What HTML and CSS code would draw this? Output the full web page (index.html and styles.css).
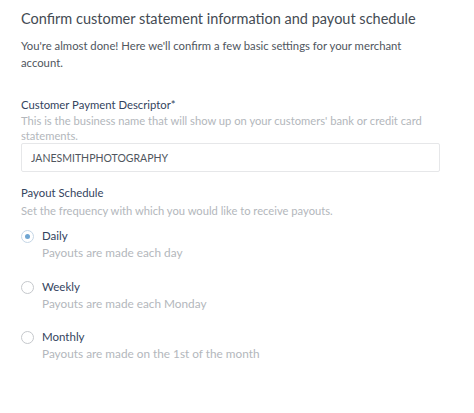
FILE: index.html
```html
<!DOCTYPE html>
<html lang="en">
<head>
    <meta charset="UTF-8">
    <meta name="viewport" content="width=device-width, initial-scale=1.0">
    <title>Payout Schedule</title>
    <link rel="stylesheet" href="styles.css">
</head>
<body>

<div class="step-container">
    <h1>Confirm customer statement information and payout schedule</h1>
    <p class="intro">You're almost done! Here we'll confirm a few basic settings for your merchant account.</p>

    <div class="field">
        <label for="descriptor">Customer Payment Descriptor*</label>
        <p class="help">This is the business name that will show up on your customers' bank or credit card statements.</p>
        <input type="text" id="descriptor" value="JANESMITHPHOTOGRAPHY">
    </div>

    <div class="field">
        <div class="field-title">Payout Schedule</div>
        <p class="help">Set the frequency with which you would like to receive payouts.</p>

        <div class="radio-list">
            <label class="radio-option">
                <span class="radio checked"></span>
                <span class="radio-text">
                    <span class="radio-label">Daily</span>
                    <span class="radio-desc">Payouts are made each day</span>
                </span>
            </label>
            <label class="radio-option">
                <span class="radio"></span>
                <span class="radio-text">
                    <span class="radio-label">Weekly</span>
                    <span class="radio-desc">Payouts are made each Monday</span>
                </span>
            </label>
            <label class="radio-option">
                <span class="radio"></span>
                <span class="radio-text">
                    <span class="radio-label">Monthly</span>
                    <span class="radio-desc">Payouts are made on the 1st of the month</span>
                </span>
            </label>
        </div>
    </div>
</div>

</body>
</html>
```

FILE: styles.css
```css
body {
    font-family: Lato, "Noto Sans", sans-serif;
    background-color: #fff;
    margin: 0;
    padding: 0;
}

.step-container {
    padding: 9px 34px 0 21px;
}

h1 {
    font-size: 14.5px;
    font-weight: normal;
    color: #444b53;
    margin: 0;
    line-height: 20px;
    white-space: nowrap;
}

.intro {
    font-size: 11.3px;
    color: #4f565e;
    line-height: 17px;
    margin: 8px 0 0 0;
}

.field {
    margin-top: 26px;
}

.field + .field {
    margin-top: 13px;
}

label, .field-title {
    display: block;
    font-size: 11.3px;
    color: #34445e;
    line-height: 16px;
}

.help {
    font-size: 11.2px;
    color: #b3b7bc;
    line-height: 15px;
    margin: 0;
}

.field-title + .help {
    margin-top: 2px;
}

input {
    display: block;
    box-sizing: border-box;
    width: 100%;
    height: 29px;
    margin-top: 0;
    padding: 0 9px;
    border: 1px solid #e6e7e9;
    border-radius: 2px;
    font-family: inherit;
    font-size: 10.5px;
    color: #4f565e;
}

.radio-list {
    margin-top: 10px;
}

.radio-option {
    display: flex;
    gap: 8px;
    height: 50.5px;
}

.radio {
    box-sizing: border-box;
    flex: none;
    width: 13px;
    height: 13px;
    margin-top: 2px;
    border: 1px solid #c5c8cc;
    border-radius: 50%;
    position: relative;
}

.radio.checked {
    border-color: #c5d6e6;
}

.radio.checked::after {
    content: "";
    position: absolute;
    left: 3px;
    top: 3px;
    width: 5px;
    height: 5px;
    border-radius: 50%;
    background-color: #6fa5d2;
}

.radio-text {
    display: flex;
    flex-direction: column;
}

.radio-label {
    font-size: 11.5px;
    color: #34445e;
    line-height: 16px;
}

.radio-desc {
    font-size: 11.8px;
    color: #b3b7bc;
    line-height: 16px;
    margin-top: 1px;
}
```
